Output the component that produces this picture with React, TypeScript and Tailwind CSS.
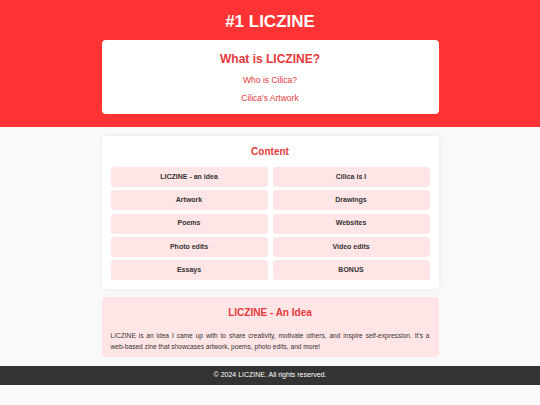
import React from 'react'

const items = [
  'LICZINE - an idea',
  'Cilica is I',
  'Artwork',
  'Drawings',
  'Poems',
  'Websites',
  'Photo edits',
  'Video edits',
  'Essays',
  'BONUS',
]

export default function App() {
  return (
    <div className="min-h-[405px] bg-[#f9f9f9] font-['Liberation_Sans',Arial,sans-serif] text-[#333]">
      {/* Header */}
      <header className="bg-[#ff3333] pt-[9px] pb-[13px]">
        <h1 className="text-center text-[17px] font-bold leading-[26px] text-white">#1 LICZINE</h1>
        <div className="mx-auto mt-[5px] w-[337px] rounded-[4px] bg-white pt-[10px] pb-[10px] text-center">
          <h2 className="text-[12px] font-bold leading-[18px] text-[#e63939]">What is LICZINE?</h2>
          <div className="mt-[7px] flex flex-col gap-[7px] text-[8.5px] leading-[11px] text-[#e63939]">
            <a href="#">Who is Cilica?</a>
            <a href="#">Cilica's Artwork</a>
          </div>
        </div>
      </header>

      {/* Content */}
      <main className="mx-auto w-[337px] pt-[9px]">
        <section className="rounded-[4px] bg-white px-[9px] pt-[8px] pb-[9px] shadow-[0_0_4px_rgba(0,0,0,0.08)]">
          <h2 className="text-center text-[10px] font-bold leading-[16px] text-[#e63939]">Content</h2>
          <div className="mt-[7px] grid grid-cols-2 gap-x-[5px] gap-y-[3.3px]">
            {items.map((item) => (
              <div
                key={item}
                className="flex h-[20px] items-center justify-center rounded-[3px] bg-[#ffe5e5] text-[7px] font-bold text-[#333]"
              >
                {item}
              </div>
            ))}
          </div>
        </section>

        <section className="mt-[8px] rounded-[4px] bg-[#ffe5e5] px-[9px] pt-[8px] pb-[5px]">
          <h2 className="text-center text-[10px] font-bold leading-[16px] text-[#e63939]">LICZINE - An Idea</h2>
          <p className="mt-[9px] text-justify text-[6.6px] leading-[11px] text-[#333]">
            LICZINE is an idea I came up with to share creativity, motivate others, and inspire self-expression. It's a{' '}
            <span className="whitespace-nowrap">web-based</span> zine that showcases artwork, poems, photo edits, and more!
          </p>
        </section>
      </main>

      {/* Footer */}
      <footer className="mt-[9px] flex h-[19px] items-center justify-center bg-[#333] text-[7px] text-white">
        © 2024 LICZINE. All rights reserved.
      </footer>
    </div>
  )
}
